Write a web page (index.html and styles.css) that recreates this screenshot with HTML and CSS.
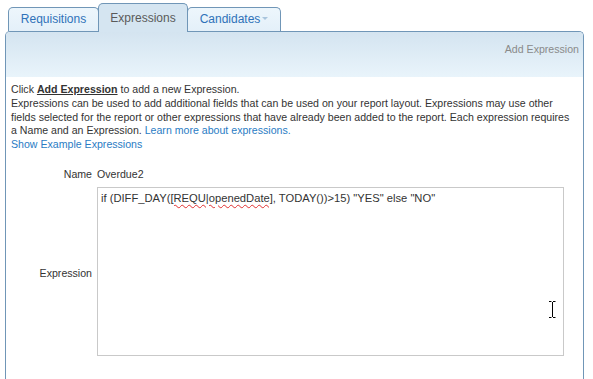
FILE: index.html
```html
<!DOCTYPE html>
<html>
<head>
<meta charset="utf-8">
<link rel="stylesheet" href="styles.css">
</head>
<body>
<div class="tabs">
  <div class="tab tab-req">Requisitions</div>
  <div class="tab tab-exp active">Expressions</div>
  <div class="tab tab-cand">Candidates<span class="caret"></span></div>
</div>
<div class="panel">
  <div class="panel-head"><span class="head-action">Add Expression</span></div>
  <div class="panel-body">
    <p class="intro">Click <span class="strong-u">Add Expression</span> to add a new Expression.<br>Expressions can be used to add additional fields that can be used on your report layout. Expressions may use other fields selected for the report or other expressions that have already been added to the report. Each expression requires a Name and an Expression. <a class="link">Learn more about expressions.</a><br><a class="link">Show Example Expressions</a></p>
    <div class="form">
      <div class="label">Name</div>
      <div class="value">Overdue2</div>
      <div class="label label-mid">Expression</div>
      <div class="editor"><span class="code">if (DIFF_DAY(<span class="spell">[REQU|openedDate]</span>, TODAY())&gt;15) "YES" else "NO"</span><svg class="ibeam" width="9" height="17" viewBox="0 0 9 17"><path d="M1 0.5h2.5M5 0.5h2.5M4.5 1v15M1 16.5h2.5M5 16.5h2.5" stroke="#000" stroke-width="1" fill="none"/></svg></div>
    </div>
  </div>
</div>
</body>
</html>
```

FILE: styles.css
```css
html, body {
  margin: 0;
  padding: 0;
  background: #fff;
  overflow: hidden;
}
body {
  font-family: "Liberation Sans", Arial, sans-serif;
  color: #333;
}
.tabs {
  display: flex;
  align-items: flex-end;
  padding: 3px 0 0 8px;
  height: 28px;
  position: relative;
  z-index: 2;
}
.tab {
  box-sizing: border-box;
  height: 24px;
  line-height: 23px;
  border: 1px solid #7096b7;
  border-bottom: none;
  border-radius: 5px 5px 0 0;
  background: linear-gradient(#edf6fc, #e4f0f9);
  color: #2f72b9;
  font-size: 12px;
  text-align: center;
  margin-right: -1px;
}
.tab-req { width: 91px; }
.tab-exp { width: 90px; }
.tab-cand { width: 94px; }
.tab.active {
  height: 29px;
  line-height: 28px;
  background: #d5e5f1;
  color: #5a5a5a;
  position: relative;
  z-index: 3;
  margin-bottom: -1px;
}
.caret {
  display: inline-block;
  width: 0;
  height: 0;
  border-left: 3px solid transparent;
  border-right: 3px solid transparent;
  border-top: 3px solid #a9c5dd;
  margin-left: 2px;
  vertical-align: 3px;
}
.panel {
  margin: 0 9px 0 5px;
  border: 1px solid #7096b7;
  border-bottom: none;
  border-radius: 5px 5px 0 0;
  height: 347px;
  overflow: hidden;
}
.panel-head {
  height: 45px;
  background: linear-gradient(#d4e4f0, #e9f4fb);
  text-align: right;
  padding: 7px 4px 0 0;
  box-sizing: border-box;
}
.head-action {
  font-size: 10.6px;
  color: #8a8a8a;
  line-height: 14px;
}
.panel-body {
  padding: 6px 5px 0 5px;
}
.intro {
  margin: 0;
  font-size: 10.6px;
  line-height: 13.75px;
  color: #333;
}
.strong-u {
  font-weight: bold;
  text-decoration: underline;
}
.link {
  color: #2a7cc4;
}
.form {
  display: grid;
  grid-template-columns: 81px 467px;
  column-gap: 5px;
  row-gap: 6px;
  margin-top: 15px;
  font-size: 10.6px;
}
.label {
  text-align: right;
  line-height: 14px;
  color: #333;
}
.label-mid {
  align-self: center;
  padding-top: 4px;
}
.value {
  line-height: 14px;
  color: #333;
}
.editor {
  position: relative;
  box-sizing: border-box;
  height: 169px;
  border: 1px solid #c9c9c9;
  padding: 3px 3px;
  line-height: 14px;
  font-size: 11.2px;
  color: #333;
}
.spell {
  text-decoration: underline wavy #e03030;
  text-decoration-thickness: 1px;
  text-underline-offset: 2px;
}
.ibeam {
  position: absolute;
  left: 450px;
  top: 113px;
}
```
